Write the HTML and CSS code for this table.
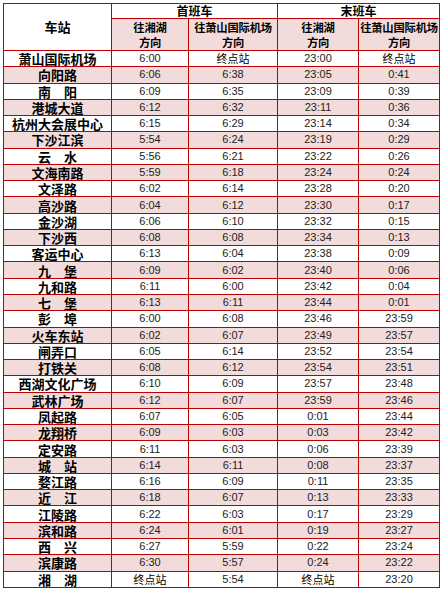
FILE: index.html
```html
<!DOCTYPE html>
<html lang="zh-CN">
<head>
<meta charset="utf-8">
<title>首末班车时刻表</title>
<link rel="stylesheet" href="styles.css">
</head>
<body>
<table class="timetable">
  <colgroup>
    <col class="c-station"><col class="c-a"><col class="c-b"><col class="c-c"><col class="c-d">
  </colgroup>
  <thead>
    <tr class="h1">
      <th rowspan="2" class="station-head">车站</th>
      <th colspan="2">首班车</th>
      <th colspan="2">末班车</th>
    </tr>
    <tr class="h2">
      <th>往湘湖<br>方向</th>
      <th>往萧山国际机场<br>方向</th>
      <th>往湘湖<br>方向</th>
      <th>往萧山国际机场<br>方向</th>
    </tr>
  </thead>
  <tbody>
    <tr><td class="st">萧山国际机场</td><td>6:00</td><td class="zh">终点站</td><td>23:00</td><td class="zh">终点站</td></tr>
    <tr><td class="st">向阳路</td><td>6:06</td><td>6:38</td><td>23:05</td><td>0:41</td></tr>
    <tr><td class="st">南　阳</td><td>6:09</td><td>6:35</td><td>23:09</td><td>0:39</td></tr>
    <tr><td class="st">港城大道</td><td>6:12</td><td>6:32</td><td>23:11</td><td>0:36</td></tr>
    <tr><td class="st">杭州大会展中心</td><td>6:15</td><td>6:29</td><td>23:14</td><td>0:34</td></tr>
    <tr><td class="st">下沙江滨</td><td>5:54</td><td>6:24</td><td>23:19</td><td>0:29</td></tr>
    <tr><td class="st">云　水</td><td>5:56</td><td>6:21</td><td>23:22</td><td>0:26</td></tr>
    <tr><td class="st">文海南路</td><td>5:59</td><td>6:18</td><td>23:24</td><td>0:24</td></tr>
    <tr><td class="st">文泽路</td><td>6:02</td><td>6:14</td><td>23:28</td><td>0:20</td></tr>
    <tr><td class="st">高沙路</td><td>6:04</td><td>6:12</td><td>23:30</td><td>0:17</td></tr>
    <tr><td class="st">金沙湖</td><td>6:06</td><td>6:10</td><td>23:32</td><td>0:15</td></tr>
    <tr><td class="st">下沙西</td><td>6:08</td><td>6:08</td><td>23:34</td><td>0:13</td></tr>
    <tr><td class="st">客运中心</td><td>6:13</td><td>6:04</td><td>23:38</td><td>0:09</td></tr>
    <tr><td class="st">九　堡</td><td>6:09</td><td>6:02</td><td>23:40</td><td>0:06</td></tr>
    <tr><td class="st">九和路</td><td>6:11</td><td>6:00</td><td>23:42</td><td>0:04</td></tr>
    <tr><td class="st">七　堡</td><td>6:13</td><td>6:11</td><td>23:44</td><td>0:01</td></tr>
    <tr><td class="st">彭　埠</td><td>6:00</td><td>6:08</td><td>23:46</td><td>23:59</td></tr>
    <tr><td class="st">火车东站</td><td>6:02</td><td>6:07</td><td>23:49</td><td>23:57</td></tr>
    <tr><td class="st">闸弄口</td><td>6:05</td><td>6:14</td><td>23:52</td><td>23:54</td></tr>
    <tr><td class="st">打铁关</td><td>6:08</td><td>6:12</td><td>23:54</td><td>23:51</td></tr>
    <tr><td class="st">西湖文化广场</td><td>6:10</td><td>6:09</td><td>23:57</td><td>23:48</td></tr>
    <tr><td class="st">武林广场</td><td>6:12</td><td>6:07</td><td>23:59</td><td>23:46</td></tr>
    <tr><td class="st">凤起路</td><td>6:07</td><td>6:05</td><td>0:01</td><td>23:44</td></tr>
    <tr><td class="st">龙翔桥</td><td>6:09</td><td>6:03</td><td>0:03</td><td>23:42</td></tr>
    <tr><td class="st">定安路</td><td>6:11</td><td>6:03</td><td>0:06</td><td>23:39</td></tr>
    <tr><td class="st">城　站</td><td>6:14</td><td>6:11</td><td>0:08</td><td>23:37</td></tr>
    <tr><td class="st">婺江路</td><td>6:16</td><td>6:09</td><td>0:11</td><td>23:35</td></tr>
    <tr><td class="st">近　江</td><td>6:18</td><td>6:07</td><td>0:13</td><td>23:33</td></tr>
    <tr><td class="st">江陵路</td><td>6:22</td><td>6:03</td><td>0:17</td><td>23:29</td></tr>
    <tr><td class="st">滨和路</td><td>6:24</td><td>6:01</td><td>0:19</td><td>23:27</td></tr>
    <tr><td class="st">西　兴</td><td>6:27</td><td>5:59</td><td>0:22</td><td>23:24</td></tr>
    <tr><td class="st">滨康路</td><td>6:30</td><td>5:57</td><td>0:24</td><td>23:22</td></tr>
    <tr><td class="st">湘　湖</td><td class="zh">终点站</td><td>5:54</td><td class="zh">终点站</td><td>23:20</td></tr>
  </tbody>
</table>
</body>
</html>
```
FILE: styles.css
```css
html, body {
  margin: 0;
  padding: 0;
  background: #ffffff;
}
body {
  padding: 3px;
}
.timetable {
  border-collapse: collapse;
  table-layout: fixed;
  width: 437px;
  font-family: "Liberation Sans", "Noto Sans CJK SC", sans-serif;
  color: #111;
}
.c-station { width: 108px; }
.c-a { width: 77px; }
.c-b { width: 89px; }
.c-c { width: 81px; }
.c-d { width: 81px; }

.timetable th,
.timetable td {
  border: 1px solid #c00000;
  padding: 0;
  text-align: center;
  vertical-align: middle;
  overflow: hidden;
  white-space: nowrap;
}
.timetable th {
  font-family: "Noto Sans CJK SC", sans-serif;
  font-weight: 700;
  font-size: 12px;
  line-height: 14px;
  color: #000;
}
.h1 th { height: 14px; background: #ffffff; }
.h1 .station-head { font-size: 13px; background: #ffffff; }
.h2 th {
  height: 31px;
  background: #f2dcdb;
  font-size: 11.3px;
  line-height: 15px;
  letter-spacing: -0.2px;
}

.timetable tbody tr { height: 16.27px; }
.timetable tbody tr:nth-child(even) { background: #f2dcdb; }
.timetable tbody tr:nth-child(odd) { background: #ffffff; }

.timetable td {
  font-size: 11px;
  line-height: 15px;
  color: #222;
}
.timetable td.st {
  font-family: "Noto Sans CJK SC", sans-serif;
  font-weight: 700;
  font-size: 13px;
  line-height: 15px;
  color: #000;
}
.timetable td.zh {
  font-family: "Noto Sans CJK SC", sans-serif;
  font-size: 11px;
  color: #000;
}
```
